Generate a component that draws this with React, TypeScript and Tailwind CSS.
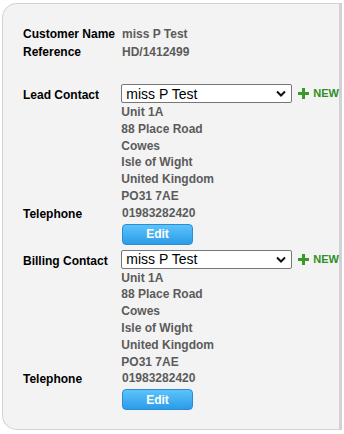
import React from "react";

const address = ["Unit 1A", "88 Place Road", "Cowes", "Isle of Wight", "United Kingdom", "PO31 7AE"];

function ContactSelect() {
    return (
        <div className="flex items-center gap-[6px]">
            <div className="flex h-[19px] w-[171px] items-center justify-between rounded-[2px] border border-[#767676] bg-white pl-[4px] pr-[5px] text-[14px] leading-none text-black">
                <span>miss P Test</span>
                <svg width="10" height="7" viewBox="0 0 10 7">
                    <path d="M1 1.5 L5 5.5 L9 1.5" fill="none" stroke="#111" strokeWidth="2" />
                </svg>
            </div>
            <div className="flex items-center gap-[4px] text-[11px] font-bold text-[#2f8f1f]">
                <svg width="11" height="11" viewBox="0 0 11 11">
                    <path d="M4 0 H7 V4 H11 V7 H7 V11 H4 V7 H0 V4 H4 Z" fill="#3a9a28" />
                </svg>
                <span>NEW</span>
            </div>
        </div>
    );
}

function Contact({ label }: { label: string }) {
    return (
        <div className="flex flex-col">
            <div className="flex">
                <div className="w-[99px] pt-[2px] font-bold text-black">{label}</div>
                <div className="flex flex-col">
                    <ContactSelect />
                    <div className="flex flex-col pt-[1px] leading-[16.8px] text-[#5b5b5b] font-bold">
                        {address.map((line) => (
                            <div key={line}>{line}</div>
                        ))}
                    </div>
                </div>
            </div>
            <div className="flex leading-[16.8px]">
                <div className="w-[99px] pt-[1px] font-bold text-black">Telephone</div>
                <div className="font-bold text-[#5b5b5b]">01983282420</div>
            </div>
            <div className="flex pt-[1px]">
                <div className="w-[99px]" />
                <button className="h-[21px] w-[71px] rounded-[4px] border border-[#2b8bd3] bg-gradient-to-b from-[#5cc3fa] to-[#2a9ce9] text-[12px] font-bold text-white">
                    Edit
                </button>
            </div>
        </div>
    );
}

export default function App() {
    return (
        <div className="h-[434px] w-[344px] bg-white pt-[3px] pl-[2px] font-['Liberation_Sans',Arial,sans-serif] text-[12px]">
            <div className="flex h-[427px] w-[340px] flex-col rounded-l-[15px] border border-r-[3px] border-[#d2d2d6] bg-[#f3f3f3] pl-[20px] pt-[21px]">
                <div className="flex leading-[18px]">
                    <div className="w-[99px] font-bold text-black">Customer Name</div>
                    <div className="font-bold text-[#5b5b5b]">miss P Test</div>
                </div>
                <div className="flex leading-[18px]">
                    <div className="w-[99px] font-bold text-black">Reference</div>
                    <div className="font-bold text-[#5b5b5b]">HD/1412499</div>
                </div>
                <div className="pt-[23px]">
                    <Contact label="Lead Contact" />
                </div>
                <div className="pt-[5px]">
                    <Contact label="Billing Contact" />
                </div>
            </div>
        </div>
    );
}
